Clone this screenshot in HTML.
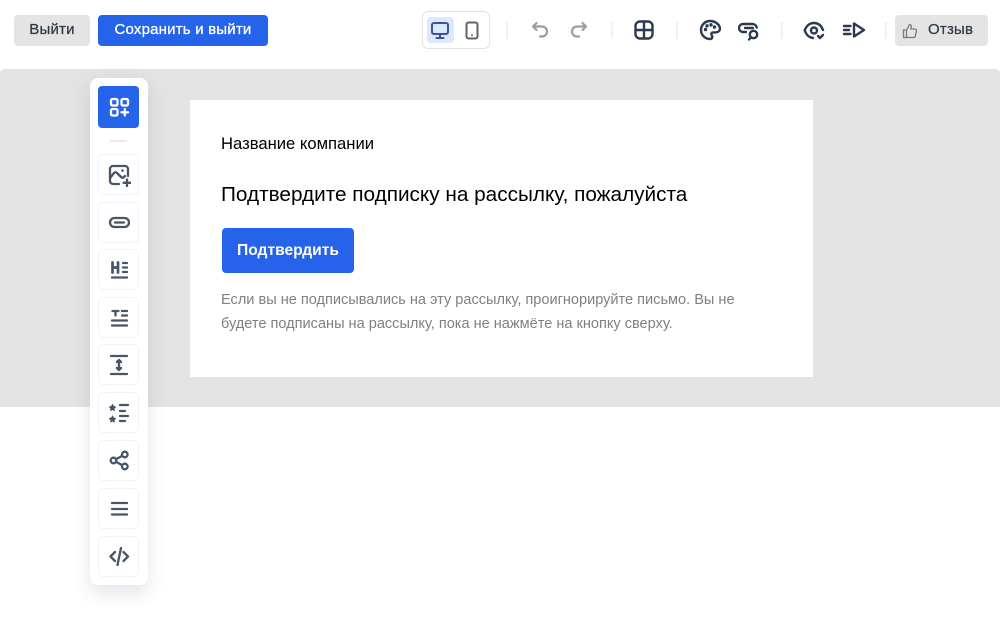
<!DOCTYPE html>
<html lang="ru"><head><meta charset="utf-8"><title>Редактор</title>
<style>
html,body{margin:0;padding:0;background:#fff}
body{width:1000px;height:627px;position:relative;overflow:hidden;font-family:"Liberation Sans",sans-serif}
.a{position:absolute}
.btn{position:absolute;top:15px;height:31px;border-radius:4px;line-height:30px;text-align:center;font-size:15px;letter-spacing:.2px;-webkit-text-stroke:.3px currentColor;white-space:nowrap}
.sep{position:absolute;top:22px;width:2px;height:17px;background:#edf0f6}
svg{position:absolute;fill:none;stroke-linecap:round;stroke-linejoin:round}
.tile{position:absolute;left:98px;width:39px;height:39px;border:1px solid #f0f3f9;border-radius:5px;background:#fff}
.tile svg{left:8px;top:8px;stroke:#475569;stroke-width:2.300}
.t{stroke:#2c3a50;stroke-width:2.400}
</style></head><body>

<div class="a" style="left:0;top:69px;width:1000px;height:338px;background:#e3e3e3;border-radius:5px 5px 0 0"></div>

<div class="btn" style="left:14px;width:76px;background:#e4e4e4;color:#2f3a4a">Выйти</div>
<div class="btn" style="left:98px;width:170px;background:#2563eb;color:#fff">Сохранить и выйти</div>

<div class="a" style="left:422px;top:11px;width:66px;height:36px;border:1px solid #e2e2e2;border-radius:6px"></div>
<div class="a" style="left:427px;top:17px;width:27px;height:26px;background:#dbe8fe;border-radius:4px"></div>
<svg style="left:430px;top:20px" width="20" height="20" viewBox="0 0 20 20" stroke="#3b5598" stroke-width="2"><rect x="2" y="3" width="16" height="11" rx="2"/><path d="M10 14v4M6.500 18h7"/></svg>
<svg style="left:462px;top:20px" width="20" height="20" viewBox="0 0 20 20" stroke="#5f6368" stroke-width="2"><rect x="4.500" y="2.500" width="11" height="16" rx="2"/><path d="M10 15.200v.1"/></svg>

<div class="sep" style="left:506px"></div>
<svg style="left:531px;top:21px" width="18" height="18" viewBox="0 0 18 18" stroke="#9a9da3" stroke-width="2.200"><path d="M5.500 2 2 5.500 5.500 9M2.500 5.500H11a4.500 4.500 0 0 1 0 10H9"/></svg>
<svg style="left:570px;top:21px" width="18" height="18" viewBox="0 0 18 18" stroke="#9a9da3" stroke-width="2.200"><path d="M12.500 2 16 5.500 12.500 9M15.500 5.500H7a4.500 4.500 0 0 0 0 10h2"/></svg>
<div class="sep" style="left:611px"></div>
<svg class="t" style="left:634px;top:20px" width="20" height="20" viewBox="0 0 20 20"><rect x="1.500" y="1.500" width="17" height="17" rx="4.500"/><path d="M10 1.500v17M1.500 10h17"/></svg>
<div class="sep" style="left:676px"></div>

<svg class="t" style="left:699px;top:19px" width="22" height="22" viewBox="0 0 22 22"><path d="M11 2a9 9 0 1 0 0 18c1.600 0 2.300-1 2.300-2.100 0-1.400-1-1.800-1-2.900 0-1 .8-1.600 1.800-1.600h2.400c2.500 0 4.500-1.500 4.500-3.900C20.500 5.500 16.300 2 11 2Z"/><path d="M6.500 10.500v.1M8 6.800v.1M12 5.800v.1M15.500 8v.1" stroke-width="3.400"/></svg>
<svg class="t" style="left:738px;top:19px" width="22" height="22" viewBox="0 0 22 22"><path d="M8 13H5a4 4 0 0 1 0-8h9.500a4.500 4.500 0 0 1 4.300 3.500M7 9h8"/><circle cx="15.500" cy="15.500" r="3.700"/><path d="M12.700 18.500 11 20.500"/></svg>
<div class="sep" style="left:781px"></div>
<svg class="t" style="left:803px;top:19px" width="22" height="22" viewBox="0 0 22 22"><path d="M10 19C5.500 18.500 3 15 1.700 11.500 3 7.500 6 4 11 4c4.500 0 7.500 3 9 7"/><circle cx="11" cy="11.500" r="3"/><path d="m15 17 2 2 3-3"/></svg>
<svg class="t" style="left:842px;top:19px" width="24" height="22" viewBox="0 0 24 22"><path d="M2 7h6.500M2 11h5M2 15h6.500M12 4.500v13L22 11Z"/></svg>
<div class="sep" style="left:885px"></div>

<div class="btn" style="left:895px;width:93px;background:#e4e4e4"></div>
<svg style="left:902px;top:23px" width="16" height="16" viewBox="0 0 16 16" stroke="#77797d" stroke-width="1.300"><path d="M1.500 7h3v7.500h-3ZM4.500 7.500 7.500 1.500c1.300 0 2 1 1.800 2.200L8.800 6H13c1 0 1.600.9 1.400 1.800l-1.100 5.400c-.2.800-.8 1.300-1.600 1.300H4.500"/></svg>
<div class="a" style="left:928px;top:15px;line-height:30px;font-size:15px;letter-spacing:.2px;color:#2f3a4a;-webkit-text-stroke:.25px #2f3a4a">Отзыв</div>

<div class="a" style="left:190px;top:100px;width:623px;height:277px;background:#fff"></div>
<div class="a" style="left:221px;top:134px;font-size:16.640px;line-height:20px;color:#000;white-space:nowrap">Название компании</div>
<div class="a" style="left:221px;top:182px;font-size:20.760px;line-height:26px;color:#000;white-space:nowrap">Подтвердите подписку на рассылку, пожалуйста</div>
<div class="a" style="left:222px;top:227.500px;width:132px;height:45.500px;background:#2563eb;border-radius:4px;color:#fff;font-weight:bold;font-size:15.600px;line-height:45px;text-align:center;white-space:nowrap">Подтвердить</div>
<div class="a" style="left:221px;top:288px;width:580px;font-size:14.560px;line-height:24px;color:#808080">Если вы не подписывались на эту рассылку, проигнорируйте письмо. Вы не<br>будете подписаны на рассылку, пока не нажмёте на кнопку сверху.</div>

<div class="a" style="left:90px;top:78px;width:58px;height:507px;background:#fff;border-radius:8px;box-shadow:0 8px 18px rgba(60,70,90,.14)"></div>
<div class="a" style="left:98px;top:86px;width:41px;height:42px;background:#2563eb;border-radius:4px"></div>
<svg style="left:107px;top:95px" width="24" height="24" viewBox="0 0 24 24" stroke="#fff" stroke-width="2.300"><rect x="4" y="4" width="6.500" height="6.500" rx="1.500"/><rect x="14.500" y="4" width="6.500" height="6.500" rx="1.500"/><rect x="4" y="14" width="6.500" height="6.500" rx="1.500"/><path d="M17.800 14v6.500M14.500 17.300H21"/></svg>
<div class="a" style="left:110px;top:140px;width:17px;height:2px;background:#e6ebf3"></div>

<div class="tile" style="top:154px"><svg width="24" height="24" viewBox="0 0 24 24"><path d="M12 21H6a3 3 0 0 1-3-3V6a3 3 0 0 1 3-3h12a3 3 0 0 1 3 3v7"/><path d="m3 15 4-5c1-1 2-1 3 0l4 4c1 1 2 1 3 0l1-1"/><path d="M15.500 7.500v.1" stroke-width="2.500"/><path d="M20 16.500v6.500M16.500 19.800h7"/></svg></div>
<div class="tile" style="top:202px"><svg width="24" height="24" viewBox="0 0 24 24"><rect x="3" y="7" width="19" height="9" rx="4.500"/><path d="M8 11.500h9"/></svg></div>
<div class="tile" style="top:249px"><svg width="24" height="24" viewBox="0 0 24 24"><path d="M5.500 4.500v10M11 4.500v10M5.500 9.500H11" stroke-width="2.700"/><path d="M16 5h4M16 9.500h4M16 14h4M5 19.500h15"/></svg></div>
<div class="tile" style="top:297px"><svg width="24" height="24" viewBox="0 0 24 24"><path d="M5.500 5h6M8.500 5v4.500M15 5h5M15 9.500h5M5 14.500h15M5 19.500h15"/></svg></div>
<div class="tile" style="top:344px"><svg width="24" height="24" viewBox="0 0 24 24"><path d="M4 3h16M4 21h16M12 7.500v9M10 9l2-2 2 2M10 15l2 2 2-2"/></svg></div>
<div class="tile" style="top:392px"><svg width="24" height="24" viewBox="0 0 24 24"><path d="m5.500 3.500 1 2 2 .5-1.500 1.500.3 2-1.800-1-1.800 1 .3-2L2.500 6l2-.5ZM5.500 15l1 2 2 .5-1.500 1.500.3 2-1.800-1-1.800 1 .3-2-1.500-1.500 2-.5Z" fill="#475569" stroke-width="1"/><path d="M13 4h8M13 10h5M13 15h8M13 20h5"/></svg></div>
<div class="tile" style="top:440px"><svg width="24" height="24" viewBox="0 0 24 24"><circle cx="6.500" cy="11.500" r="2.800"/><circle cx="17.800" cy="5.500" r="2.800"/><circle cx="17.800" cy="17.500" r="2.800"/><path d="m9 10.200 6.300-3.400M9 12.800l6.300 3.400"/></svg></div>
<div class="tile" style="top:488px"><svg width="24" height="24" viewBox="0 0 24 24"><path d="M5 6h15M5 12h15M5 17.500h15"/></svg></div>
<div class="tile" style="top:536px"><svg width="24" height="24" viewBox="0 0 24 24"><path d="M8 7 3.500 11.500 8 16M16.500 7l4.500 4.500-4.500 4.500M14 3l-3.500 17"/></svg></div>

</body></html>
